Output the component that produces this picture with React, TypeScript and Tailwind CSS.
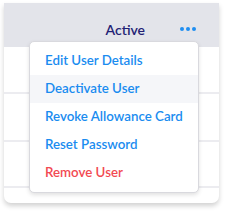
import React from 'react';

const items = [
  { label: 'Edit User Details', danger: false, active: false },
  { label: 'Deactivate User', danger: false, active: true },
  { label: 'Revoke Allowance Card', danger: false, active: false },
  { label: 'Reset Password', danger: false, active: false },
  { label: 'Remove User', danger: true, active: false },
];

export default function App() {
  return (
    <div className="w-[225px] h-[212px] bg-white pt-[3px] px-[4px] font-['Lato',sans-serif]">
      <div className="relative w-[215px] h-[200px] rounded-b-[7px] bg-white shadow-[0_3px_5px_rgba(0,0,0,0.18)]">
        {/* header */}
        <div className="h-[44px] bg-[#e3e4ea] flex items-center justify-end pr-[23px]">
          <span className="text-[14px] font-semibold text-[#231f75] mr-[35px] mt-[9px]">Active</span>
          <div className="flex gap-[2px] mt-[8px]">
            <span className="w-[4px] h-[4px] rounded-full bg-[#1f8ef1]" />
            <span className="w-[4px] h-[4px] rounded-full bg-[#1f8ef1]" />
            <span className="w-[4px] h-[4px] rounded-full bg-[#1f8ef1]" />
          </div>
        </div>
        {/* rows */}
        <div className="flex flex-col">
          <div className="h-[47px] border-b-2 border-[#ececf0]" />
          <div className="h-[48px] border-b-2 border-[#ececf0]" />
          <div className="h-[46px] border-b-2 border-[#ececf0]" />
        </div>

        {/* dropdown */}
        <div className="absolute left-[25px] top-[38px] w-[170px] rounded-[5px] border border-[#d9d9de] bg-white py-[5px] shadow-[0_2px_4px_rgba(0,0,0,0.12)]">
          {items.map((it) => (
            <div
              key={it.label}
              className={`h-[28px] flex items-center pl-[15px] text-[13.3px] font-semibold ${
                it.active ? 'bg-[#f5f6f9]' : ''
              } ${it.danger ? 'text-[#f24a52]' : 'text-[#1a8cf0]'}`}
            >
              {it.label}
            </div>
          ))}
        </div>
      </div>
    </div>
  );
}
